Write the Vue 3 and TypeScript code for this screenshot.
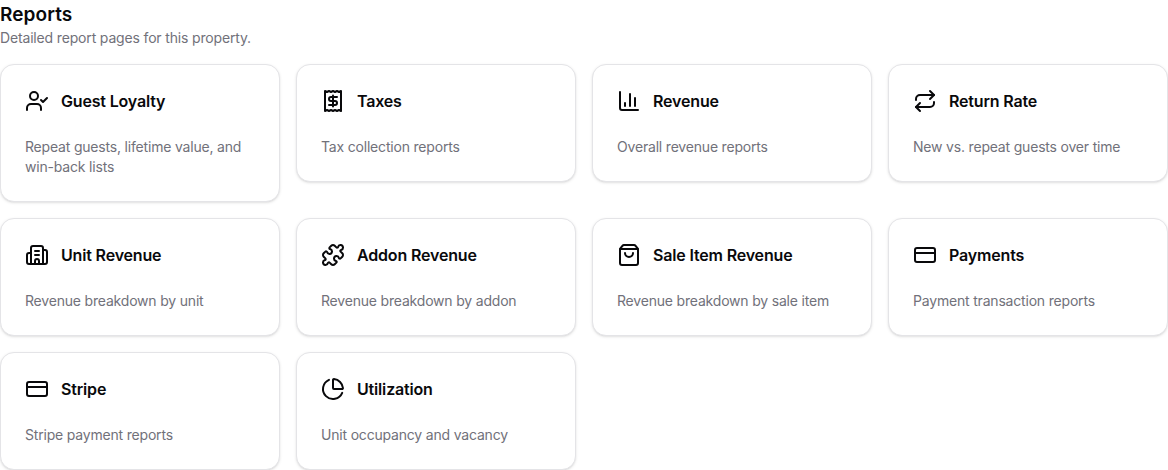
<script setup lang="ts">
interface Report { title: string; text: string; icon: string[] }

const card = ['M4 5h16a2 2 0 0 1 2 2v10a2 2 0 0 1-2 2H4a2 2 0 0 1-2-2V7a2 2 0 0 1 2-2Z', 'M2 10h20']

const reports: Report[] = [
  { title: 'Guest Loyalty', text: 'Repeat guests, lifetime value, and win-back lists', icon: ['m16 11 2 2 4-4', 'M16 21v-2a4 4 0 0 0-4-4H6a4 4 0 0 0-4 4v2', 'M13 7a4 4 0 1 1-8 0a4 4 0 0 1 8 0'] },
  { title: 'Taxes', text: 'Tax collection reports', icon: ['M4 2v20l2-1 2 1 2-1 2 1 2-1 2 1 2-1 2 1V2l-2 1-2-1-2 1-2-1-2 1-2-1-2 1Z', 'M16 8h-6a2 2 0 1 0 0 4h4a2 2 0 1 1 0 4H8', 'M12 17.5v-11'] },
  { title: 'Revenue', text: 'Overall revenue reports', icon: ['M3 3v16a2 2 0 0 0 2 2h16', 'M18 17V9', 'M13 17V5', 'M8 17v-3'] },
  { title: 'Return Rate', text: 'New vs. repeat guests over time', icon: ['m17 2 4 4-4 4', 'M3 11v-1a4 4 0 0 1 4-4h14', 'm7 22-4-4 4-4', 'M21 13v1a4 4 0 0 1-4 4H3'] },
  { title: 'Unit Revenue', text: 'Revenue breakdown by unit', icon: ['M10 12h4', 'M10 8h4', 'M14 21v-3a2 2 0 0 0-4 0v3', 'M6 10H4a2 2 0 0 0-2 2v7a2 2 0 0 0 2 2h16a2 2 0 0 0 2-2V9a2 2 0 0 0-2-2h-2', 'M6 21V5a2 2 0 0 1 2-2h8a2 2 0 0 1 2 2v16'] },
  { title: 'Addon Revenue', text: 'Revenue breakdown by addon', icon: ['M15.39 4.39a1 1 0 0 0 1.68-.474 2.5 2.5 0 1 1 3.014 3.015 1 1 0 0 0-.474 1.68l1.683 1.682a2.414 2.414 0 0 1 0 3.414L19.61 15.39a1 1 0 0 1-1.68-.474 2.5 2.5 0 1 0-3.014 3.015 1 1 0 0 1 .474 1.68l-1.683 1.682a2.414 2.414 0 0 1-3.414 0L8.61 19.61a1 1 0 0 0-1.68.474 2.5 2.5 0 1 1-3.014-3.015 1 1 0 0 0 .474-1.68l-1.683-1.682a2.414 2.414 0 0 1 0-3.414L4.39 8.61a1 1 0 0 1 1.68.474 2.5 2.5 0 1 0 3.014-3.015 1 1 0 0 1-.474-1.68l1.683-1.682a2.414 2.414 0 0 1 3.414 0z'] },
  { title: 'Sale Item Revenue', text: 'Revenue breakdown by sale item', icon: ['M16 10a4 4 0 0 1-8 0', 'M3.103 6.034h17.794', 'M3.4 5.467a2 2 0 0 0-.4 1.2V20a2 2 0 0 0 2 2h14a2 2 0 0 0 2-2V6.667a2 2 0 0 0-.4-1.2l-2-2.667A2 2 0 0 0 17 2H7a2 2 0 0 0-1.6.8z'] },
  { title: 'Payments', text: 'Payment transaction reports', icon: card },
  { title: 'Stripe', text: 'Stripe payment reports', icon: card },
  { title: 'Utilization', text: 'Unit occupancy and vacancy', icon: ['M21 12c.552 0 1.005-.449.95-.998a10 10 0 0 0-8.953-8.951c-.55-.055-.998.398-.998.95v8a1 1 0 0 0 1 1z', 'M21.21 15.89A10 10 0 1 1 8 2.83'] },
]
</script>

<template>
  <main class="page">
    <header>
      <h1>Reports</h1>
      <p class="lead">Detailed report pages for this property.</p>
    </header>
    <div class="grid">
      <a v-for="r in reports" :key="r.title" class="card">
        <div class="head">
          <svg viewBox="0 0 24 24" class="icon"><path v-for="d in r.icon" :key="d" :d="d" /></svg>
          <h2>{{ r.title }}</h2>
        </div>
        <p>{{ r.text }}</p>
      </a>
    </div>
  </main>
</template>

<style>
body { background: #fff; overflow: hidden; }
</style>

<style scoped>
.page { font-family: Inter, sans-serif; color: #09090b; }
h1, h2, p { margin: 0; }
h1 { height: 28px; font-size: 19px; line-height: 30px; font-weight: 600; letter-spacing: 0.1px; }
.lead { font-size: 14px; line-height: 20px; letter-spacing: -0.16px; color: #71717a; }
.grid { margin-top: 16px; display: grid; grid-template-columns: repeat(4, minmax(0, 1fr)); gap: 16px; align-items: start; }
.card { box-sizing: border-box; border: 1px solid #e4e4e7; border-radius: 14px; padding: 24px; background: #fff; box-shadow: 0 1px 3px rgb(0 0 0 / 0.1), 0 1px 2px -1px rgb(0 0 0 / 0.1); }
.head { display: flex; align-items: center; gap: 12px; height: 24px; margin-bottom: 24px; }
.icon { width: 24px; height: 24px; fill: none; stroke: currentColor; stroke-width: 2; stroke-linecap: round; stroke-linejoin: round; }
h2 { font-size: 16px; line-height: 24px; font-weight: 600; letter-spacing: -0.17px; }
.card p { font-size: 14px; line-height: 20px; letter-spacing: -0.19px; color: #71717a; }
</style>
